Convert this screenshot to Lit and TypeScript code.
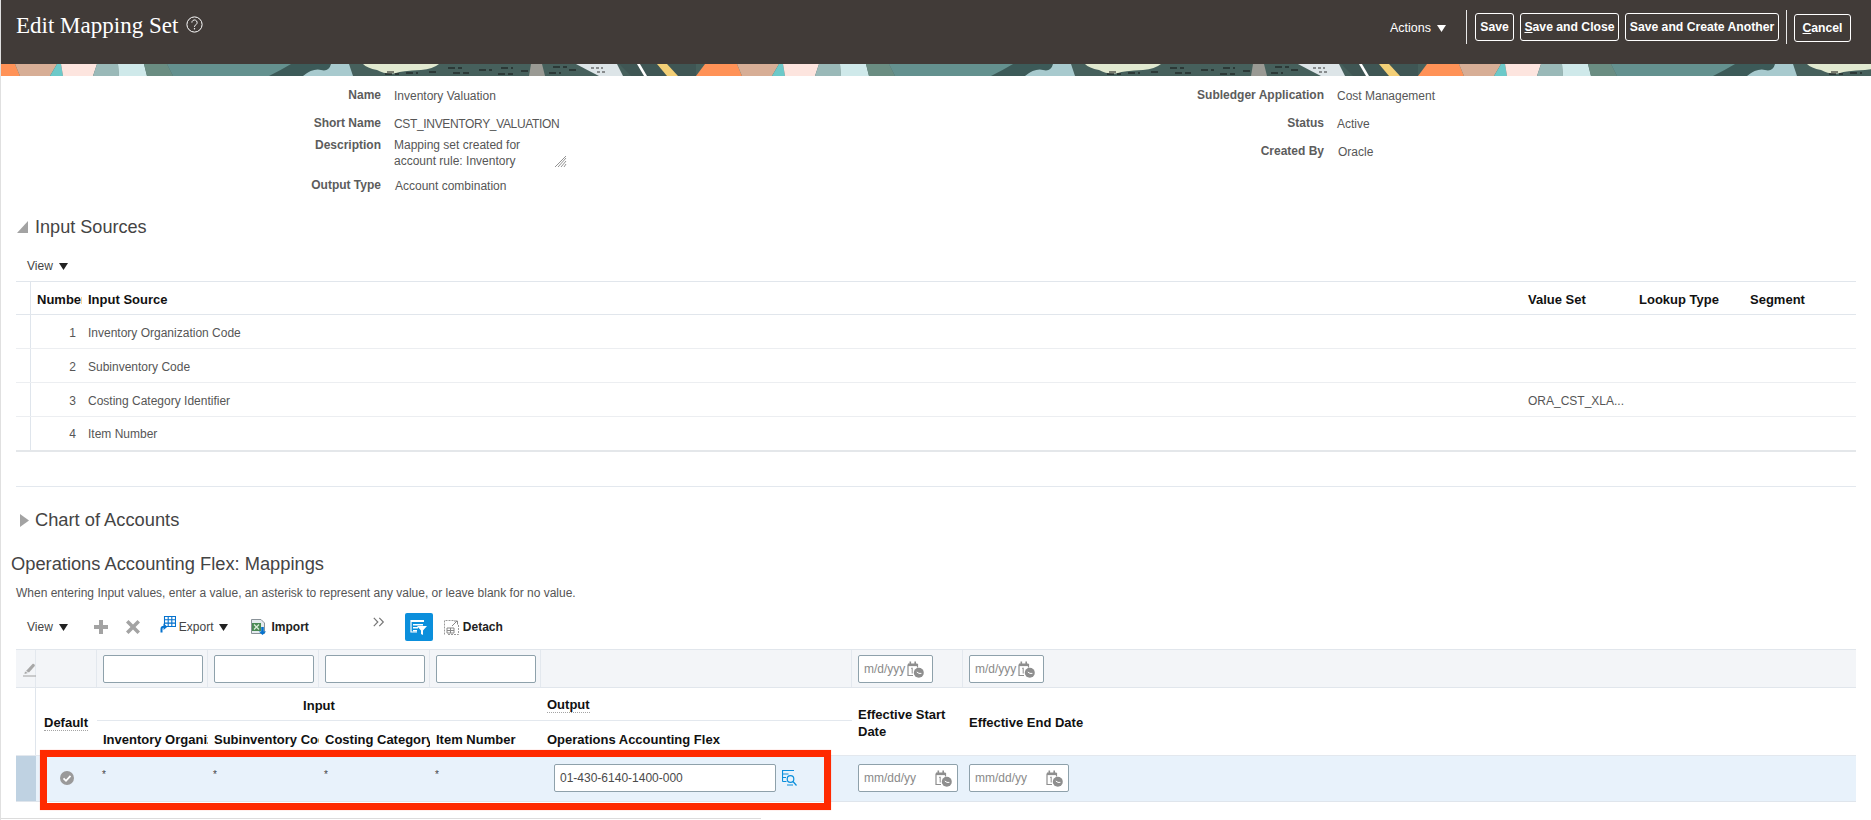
import { LitElement, html, css, svg } from "lit";
import { customElement } from "lit/decorators.js";

const caret = html`<svg class="caret" width="9" height="7" viewBox="0 0 9 7"><path d="M0 0h9L4.5 7z" fill="currentColor"/></svg>`;

const calClock = html`<svg class="cal" width="17" height="17" viewBox="0 0 17 17">
  <path d="M1 3.5h9.5v3M1 3.5v11h5" fill="none" stroke="#8e8e8e" stroke-width="1.2"/>
  <rect x="1" y="2.5" width="9.5" height="2.6" fill="#8e8e8e"/>
  <rect x="2.5" y="0.5" width="1.6" height="3" fill="#8e8e8e"/><rect x="7.4" y="0.5" width="1.6" height="3" fill="#8e8e8e"/>
  <path d="M4.2 7.5l1-.6v5.6" fill="none" stroke="#8e8e8e" stroke-width="1"/>
  <circle cx="11.8" cy="11.8" r="5" fill="#8e8e8e"/>
  <path d="M9.8 11l2.2 1.4h2.4" fill="none" stroke="#fff" stroke-width="1"/>
</svg>`;

const bannerTile = svg`
  <rect width="722" height="12" fill="#46605c"/>
  <path d="M695 12L704 0H722V12Z" fill="#ff9257"/><path d="M0 0H14L19 12H0Z" fill="#ff9257"/>
  <path d="M14 0H56L49 12H19Z" fill="#d7ae96"/>
  <path d="M56 0H60L62 12H49Z" fill="#6cc9c9"/>
  <path d="M60 0H96L92 12H62Z" fill="#fde5df"/>
  <path d="M96 0H117L118 12H92Z" fill="#9ab9b8"/>
  <path d="M117 0H143L146 12H118Z" fill="#cfe9ea"/>
  <path d="M143 0H166L172 12H146Z" fill="#6a8d82"/>
  <path d="M166 0H332V12H172Z" fill="#64918f"/>
  <path d="M290 0H332V12H268Q280 6 290 0Z" fill="#3c5a58"/>
  <path d="M302 12Q312 4 320 6Q328 8 330 0H348L352 12Z" fill="#a8cace"/>
  <path d="M362 0H438Q432 5 420 6Q400 7 395 9Q385 11 376 6Q366 4 362 0Z" fill="#e1e9d0"/>
  <path d="M530 0H541L544 12H528Z" fill="#9a9a94"/>
  <path d="M575 0H616L622 12H598Q590 8 575 0Z" fill="#dde5e8"/>
  <path d="M618 0H695V12H630Z" fill="#3f5654"/>
  <path d="M636 0H639L646 12H643Z" fill="#fff"/>
  <path d="M656 0H666L677 12H666Z" fill="#f3cf76"/>
  <path d="M384 10h14M405 9h12M428 8h10M447 4h14M452 9h16M478 6h13M500 4h12M497 10h15M520 7h10M552 3h14M548 9h12M568 6h10M386 8h8" stroke="#111" stroke-width="1" stroke-dasharray="7 3"/>
  <path d="M590 4h12M596 8h10" stroke="#333" stroke-width="1" stroke-dasharray="3 2"/>
`;

@customElement("app-root")
export class AppRoot extends LitElement {
  static styles = css`
    :host {
      display: block; position: relative; box-sizing: border-box; width: 1871px; height: 820px; overflow: hidden;
      background: #fff; border-left: 1px solid #e0e0e0;
      font-family: "Liberation Sans", Arial, sans-serif; font-size: 12px; color: #565656;
    }
    .hdr { height: 64px; background: #413b38; display: flex; align-items: flex-start; color: #fff; }
    .title { font-family: "Liberation Serif", Georgia, serif; font-size: 23px; margin: 13px 0 0 15px; line-height: 25px; white-space: nowrap; }
    .help { margin: 16px 0 0 8px; }
    .actions { display: flex; align-items: center; margin-left: auto; height: 28px; margin-top: 14px; font-size: 12.5px; gap: 6px; }
    .actions .caret { color: #fff; }
    .vr { width: 1px; height: 34px; background: #e8e8e8; margin: 10px 0 0; }
    .vr.a { margin-left: 20px; margin-right: 8px; }
    .vr.b { margin-left: 7px; margin-right: 7px; }
    .btn { box-sizing: border-box; height: 28px; margin-top: 13px; border: 1px solid #fff; border-radius: 3px; font-weight: 700; font-size: 12.2px; display: flex; align-items: center; justify-content: center; white-space: nowrap; }
    .btn + .btn { margin-left: 6px; }
    .b1 { width: 39px; } .b2 { width: 99px; } .b3 { width: 154px; } .b4 { width: 57px; margin-right: 20px; margin-top: 14px; }
    .b4 span, .b2 span { text-decoration: underline; }
    .banner { display: block; height: 12px; }

    .form { display: flex; height: 124px; padding-top: 6px; box-sizing: border-box; }
    .fl { width: 800px; display: grid; grid-template-columns: 380px 1fr; column-gap: 13px; grid-template-rows: 28px 28px 34px 28px; align-content: start; }
    .fr { flex: 1; display: grid; grid-template-columns: 523px 1fr; column-gap: 13px; grid-auto-rows: 28px; align-content: start; }
    .lbl { text-align: right; font-weight: 700; color: #5c5c5c; line-height: 26px; }
    .val { line-height: 28px; white-space: nowrap; }
    .val.off { padding-left: 1px; }
    .tight { letter-spacing: -0.34px; }
    .desc { position: relative; line-height: 16px; width: 173px; margin-top: -1px; }
    .handle { position: absolute; right: 0; top: 18px; }
    .lbl.top { line-height: 14px; }

    .sec { display: flex; align-items: center; height: 30px; font-size: 18.1px; color: #444; }
    .sec svg { margin-left: 16px; margin-right: 7px; }
    .s1 { margin-top: 12px; }
    .viewbar { height: 30px; margin-top: 9px; display: flex; align-items: center; padding-left: 26px; gap: 6px; color: #444; }
    .caret { color: #222; display: block; flex: none; }

    .t1 { margin-left: 15px; width: 1840px; border-bottom: 2px solid #e4e7ea; }
    .t1 .r { display: grid; grid-template-columns: 15px 51px 1440px 111px 111px 1fr; height: 34px; box-sizing: border-box; border-top: 1px solid #eceef1; align-items: center; }
    .t1 .r.h { height: 33px; border-top-color: #e1e6ec; color: #111; font-weight: 700; font-size: 13px; }
    .t1 .r.h + .r { border-top-color: #e1e6ec; }
    .t1 .gut { align-self: stretch; border-right: 1px solid #dfe5ec; }
    .t1 .c { padding: 2px 0 0 6px; white-space: nowrap; overflow: hidden; }
    .t1 .r:last-child .c { padding-top: 0; }
    .t1 .n { text-align: right; padding-right: 6px; padding-left: 0; }
    .dot { border-bottom: 1px dotted #a4a4a4; }
    .hr { margin: 34px 0 0 15px; width: 1840px; height: 1px; background: #e3e8ee; }
    .s2 { margin-top: 18px; font-size: 18.3px; }
    .map { margin: 14px 0 0 10px; height: 30px; line-height: 30px; font-size: 18.3px; color: #444; }
    .hint { margin: 6px 0 0 15px; line-height: 16px; color: #555; }

    .tb { display: flex; align-items: center; height: 28px; margin: 12px 0 8px 26px; color: #444; }
    .tb b { color: #222; }
    .tb svg { flex: none; display: block; }
    .sp { width: 6px; }
    .i-plus { margin-left: 26px; } .i-x { margin-left: 18px; }
    .i-exp { margin-left: 20px; margin-top: -6px; }
    .l-exp { margin-left: 3px; }
    .i-imp { margin-left: 23px; }
    .l-imp { margin-left: 4px; }
    .i-more { margin-left: 64px; margin-top: -10px; }
    .blue { width: 28px; height: 28px; border-radius: 2px; background: #0b8fdc; display: flex; align-items: center; justify-content: center; margin-left: 20px; }
    .i-det { margin-left: 11px; }
    .l-det { margin-left: 4px; }

    .t2 { margin-left: 15px; width: 1840px; }
    .g { display: grid; grid-template-columns: 20px 61px 111px 111px 111px 111px 311px 111px 1fr; }
    .flt { height: 39px; box-sizing: border-box; background: #f3f5f8; border-top: 1px solid #e1e6ec; border-bottom: 1px solid #e1e6ec; }
    .flt > div { border-right: 1px solid #e3e8ee; padding: 5px 0 0 6px; }
    .flt > div:last-child { border-right: 0; }
    .flt > .pen { padding: 13px 0 0 7px; }
    .inp { box-sizing: border-box; height: 28px; border: 1px solid #8ea1ab; border-radius: 2px; background: #fff; display: flex; align-items: center; padding-left: 5px; white-space: nowrap; overflow: hidden; }
    .inp.w { width: 100px; }
    .ph { color: #8a8a8a; flex: none; }
    .inp .cal { flex: none; }
    .d1 { width: 75px; gap: 2px; }
    .d2 { width: 100px; justify-content: space-between; padding-right: 5px; }

    .hd { grid-template-rows: 33px 34px; color: #111; font-weight: 700; font-size: 13px; }
    .hd > div { display: flex; align-items: center; padding: 2px 0 0 6px; white-space: nowrap; overflow: hidden; box-sizing: border-box; }
    .hd > .gut2 { grid-row: 1 / 3; border-right: 1px solid #dfe5ec; }
    .hd > .dflt { grid-row: 1 / 3; padding-left: 8px; }
    .hd > .inh { grid-column: 3 / 7; justify-content: center; border-bottom: 1px solid #e3e8ee; padding-left: 0; }
    .hd > .ouh { grid-column: 7; border-bottom: 1px solid #e3e8ee; }
    .hd > .eff { grid-row: 1 / 3; grid-column: 8; line-height: 17px; white-space: normal; }
    .hd > .eff2 { grid-row: 1 / 3; grid-column: 9; }
    .hd > .sub { grid-row: 2; }
    .hd > .c3 { grid-column: 3; } .hd > .c4 { grid-column: 4; } .hd > .c5 { grid-column: 5; } .hd > .c6 { grid-column: 6; } .hd > .c7 { grid-column: 7; }

    .row { height: 47px; box-sizing: border-box; background: #e8f2fb; border-top: 1px solid #e3e8ee; border-bottom: 1px solid #dfe5ec; }
    .row > div { padding: 8px 0 0 6px; color: #444; }
    .row > .sel { background: #bfd2e2; padding: 0; }
    .row > .chk { padding: 15px 0 0 24px; }
    .row > .ast { padding-top: 12px; padding-left: 5px; line-height: 14px; font-size: 10px; }
    .row > .outc { display: flex; align-items: flex-start; padding-left: 13px; }
    .oinp { width: 222px; padding-left: 5px; color: #4a4a4a; }
    .look { margin: 6px 0 0 6px; }
    .foot { margin-top: 16px; width: 760px; height: 1px; background: #dcdcdc; }
    .red { position: absolute; left: 39px; top: 750px; width: 791px; height: 60px; box-sizing: border-box; border: 7px solid #ff2a00; box-shadow: 0 0 1px rgba(255,42,0,.4); pointer-events: none; }
  `;

  render() {
    return html`
      <div class="hdr">
        <div class="title">Edit Mapping Set</div>
        <svg class="help" width="17" height="17" viewBox="0 0 17 17"><circle cx="8.5" cy="8.5" r="7.6" fill="none" stroke="#fff" stroke-width="1"/><path d="M5.9 6.6a2.6 2.6 0 1 1 4.2 2c-1 .8-1.6 1.2-1.6 2.4" fill="none" stroke="#fff" stroke-width="1"/><circle cx="8.5" cy="12.8" r=".7" fill="#fff"/></svg>
        <div class="actions"><span>Actions</span>${caret}</div>
        <div class="vr a"></div>
        <div class="btn b1">Save</div>
        <div class="btn b2"><span>S</span>ave and Close</div>
        <div class="btn b3">Save and Create Another</div>
        <div class="vr b"></div>
        <div class="btn b4"><span>C</span>ancel</div>
      </div>
      <svg class="banner" width="1870" height="12">
        <defs><pattern id="tile" width="722" height="12" patternUnits="userSpaceOnUse">${bannerTile}</pattern></defs>
        <rect width="1870" height="12" fill="url(#tile)"/>
      </svg>

      <div class="form">
        <div class="fl">
          <div class="lbl">Name</div><div class="val">Inventory Valuation</div>
          <div class="lbl">Short Name</div><div class="val tight">CST_INVENTORY_VALUATION</div>
          <div class="lbl top">Description</div>
          <div class="desc">Mapping set created for<br />account rule: Inventory
            <svg class="handle" width="12" height="13" viewBox="0 0 12 13"><path d="M0 12L11 1M3 12l8-9M6 12l5-6M9 12l2-3" stroke="#777" stroke-width=".8" fill="none"/></svg>
          </div>
          <div class="lbl">Output Type</div><div class="val off">Account combination</div>
        </div>
        <div class="fr">
          <div class="lbl">Subledger Application</div><div class="val">Cost Management</div>
          <div class="lbl">Status</div><div class="val">Active</div>
          <div class="lbl">Created By</div><div class="val off">Oracle</div>
        </div>
      </div>

      <div class="sec s1"><svg width="11" height="12" viewBox="0 0 11 12"><path d="M11 0V12H0Z" fill="#a3a3a3"/></svg>Input Sources</div>
      <div class="viewbar"><span>View</span>${caret}</div>
      <div class="t1">
        <div class="r h"><div class="gut"></div><div class="c">Number</div><div class="c">Input Source</div><div class="c">Value Set</div><div class="c">Lookup Type</div><div class="c"><span class="dot">Segment</span></div></div>
        ${[["1", "Inventory Organization Code", ""], ["2", "Subinventory Code", ""], ["3", "Costing Category Identifier", "ORA_CST_XLA..."], ["4", "Item Number", ""]].map(
          ([n, s, v]) => html`<div class="r"><div class="gut"></div><div class="c n">${n}</div><div class="c">${s}</div><div class="c">${v}</div><div></div><div></div></div>`
        )}
      </div>
      <div class="hr"></div>
      <div class="sec s2"><svg width="9" height="13" viewBox="0 0 9 13" style="margin-left:19px;margin-right:6px"><path d="M0 0L9 6.5L0 13Z" fill="#a3a3a3"/></svg>Chart of Accounts</div>
      <div class="map">Operations Accounting Flex: Mappings</div>
      <div class="hint">When entering Input values, enter a value, an asterisk to represent any value, or leave blank for no value.</div>

      <div class="tb">
        <span>View</span><span class="sp"></span>${caret}
        <svg class="i-plus" width="14" height="14" viewBox="0 0 14 14"><path d="M5 0h4v5h5v4H9v5H5V9H0V5h5z" fill="#a3a3a3"/></svg>
        <svg class="i-x" width="14" height="14" viewBox="0 0 14 14"><path d="M2.5 0L7 4.5 11.500 0 14 2.500 9.500 7 14 11.500 11.500 14 7 9.500 2.500 14 0 11.500 4.500 7 0 2.500z" fill="#a3a3a3"/></svg>
        <svg class="i-exp" width="16" height="17" viewBox="0 0 16 17">
          <path d="M4.500 .5h11v10h-11z M4.500 3.800h11 M4.500 7.100h11 M8.200 .5v10 M11.800 .5v10" fill="none" stroke="#0572ce" stroke-width="1.100"/>
          <path d="M1.500 16.500v-3.500c0-1.500 .8-2.200 2.500-2.200" fill="none" stroke="#0572ce" stroke-width="2"/><path d="M3.500 7.500l4 3.300-4 3.200z" fill="#0572ce"/>
        </svg>
        <span class="l-exp">Export</span><span class="sp"></span>${caret}
        <svg class="i-imp" width="16" height="16" viewBox="0 0 16 16">
          <path d="M.5.500h9.500l3.500 3.500v10.500H.5z" fill="#e4eaee" stroke="#8a9298"/><rect x="1" y="4" width="9" height="8" fill="#4a8a55"/><path d="M3 5.500l5 5M8 5.500l-5 5" stroke="#d8ecd8" stroke-width="1.300"/>
          <path d="M10.200 8v4.500H7.800l3.700 3.500 3.700-3.500h-2.400V8z" fill="#0572ce"/>
        </svg>
        <b class="l-imp">Import</b>
        <svg class="i-more" width="12" height="10" viewBox="0 0 12 10"><path d="M.8.800l4 4.200-4 4.200M6.300.8l4 4.200-4 4.200" fill="none" stroke="#777" stroke-width="1.200"/></svg>
        <div class="blue">
          <svg width="18" height="17" viewBox="0 0 18 17"><path d="M1 1h13v2H1zM3 5h10v1.500H3zM3 8h5v1.500H3zM3 11h4v1.500H3z" fill="#fff"/><path d="M1 1v12h6" fill="none" stroke="#fff" stroke-width="1.200"/><path d="M7 7h10l-4 4.500V16l-2-1v-3.500z" fill="#fff"/></svg>
        </div>
        <svg class="i-det" width="15" height="15" viewBox="0 0 15 15"><path d="M.5 14.500V.5h9M14.500 5v9.500H4" fill="none" stroke="#999" stroke-dasharray="2 1"/><path d="M3 8h7v5H3zM3 10.500h7M6.500 8v5" fill="none" stroke="#888"/><path d="M8 6l5-5M10 1h3.500v3.500" fill="none" stroke="#888"/></svg>
        <b class="l-det">Detach</b>
      </div>

      <div class="t2">
        <div class="g flt">
          <div class="pen"><svg width="13" height="14" viewBox="0 0 13 14"><path d="M3 8L9.500 1c1-.8 2.800.5 2.300 2L6 9.500z" fill="#a8a8a8"/><path d="M2 8.500l3 1.500-3.500 1z" fill="#a8a8a8"/><path d="M0 13h13" stroke="#a0a0a0" stroke-width="1"/></svg></div>
          <div></div>
          <div><div class="inp w"></div></div>
          <div><div class="inp w"></div></div>
          <div><div class="inp w"></div></div>
          <div><div class="inp w"></div></div>
          <div></div>
          <div><div class="inp d1"><span class="ph">m/d/yyy</span>${calClock}</div></div>
          <div><div class="inp d1"><span class="ph">m/d/yyy</span>${calClock}</div></div>
        </div>
        <div class="g hd">
          <div class="gut2"></div>
          <div class="dflt"><span class="dot">Default</span></div>
          <div class="inh">Input</div>
          <div class="ouh"><span class="dot">Output</span></div>
          <div class="eff">Effective Start Date</div>
          <div class="eff2">Effective End Date</div>
          <div class="sub c3">Inventory Organization Code</div>
          <div class="sub c4">Subinventory Code</div>
          <div class="sub c5">Costing Category Identifier</div>
          <div class="sub c6">Item Number</div>
          <div class="sub c7">Operations Accounting Flex</div>
        </div>
        <div class="g row">
          <div class="sel"></div>
          <div class="chk"><svg width="14" height="14" viewBox="0 0 14 14"><circle cx="7" cy="7" r="7" fill="#9a9a9a"/><path d="M3.500 7.300l2.500 2.500 4.500-5" fill="none" stroke="#fff" stroke-width="1.800"/></svg></div>
          <div class="ast">*</div><div class="ast">*</div><div class="ast">*</div><div class="ast">*</div>
          <div class="outc"><div class="inp oinp">01-430-6140-1400-000</div>
            <svg class="look" width="15" height="16" viewBox="0 0 15 16"><path d="M12 .5H.5v11M.5 4h6M.5 7.500h3.500M.5 11.500h4" fill="none" stroke="#0b8fdc" stroke-width="1.200"/><circle cx="8.500" cy="9" r="3.300" fill="none" stroke="#0b8fdc" stroke-width="1.200"/><path d="M11 11.500l3.500 4M5 15h6" stroke="#0b8fdc" stroke-width="1.200"/></svg>
          </div>
          <div><div class="inp d2"><span class="ph">mm/dd/yy</span>${calClock}</div></div>
          <div><div class="inp d2"><span class="ph">mm/dd/yy</span>${calClock}</div></div>
        </div>
      </div>
      <div class="foot"></div>
      <div class="red"></div>
    `;
  }
}
